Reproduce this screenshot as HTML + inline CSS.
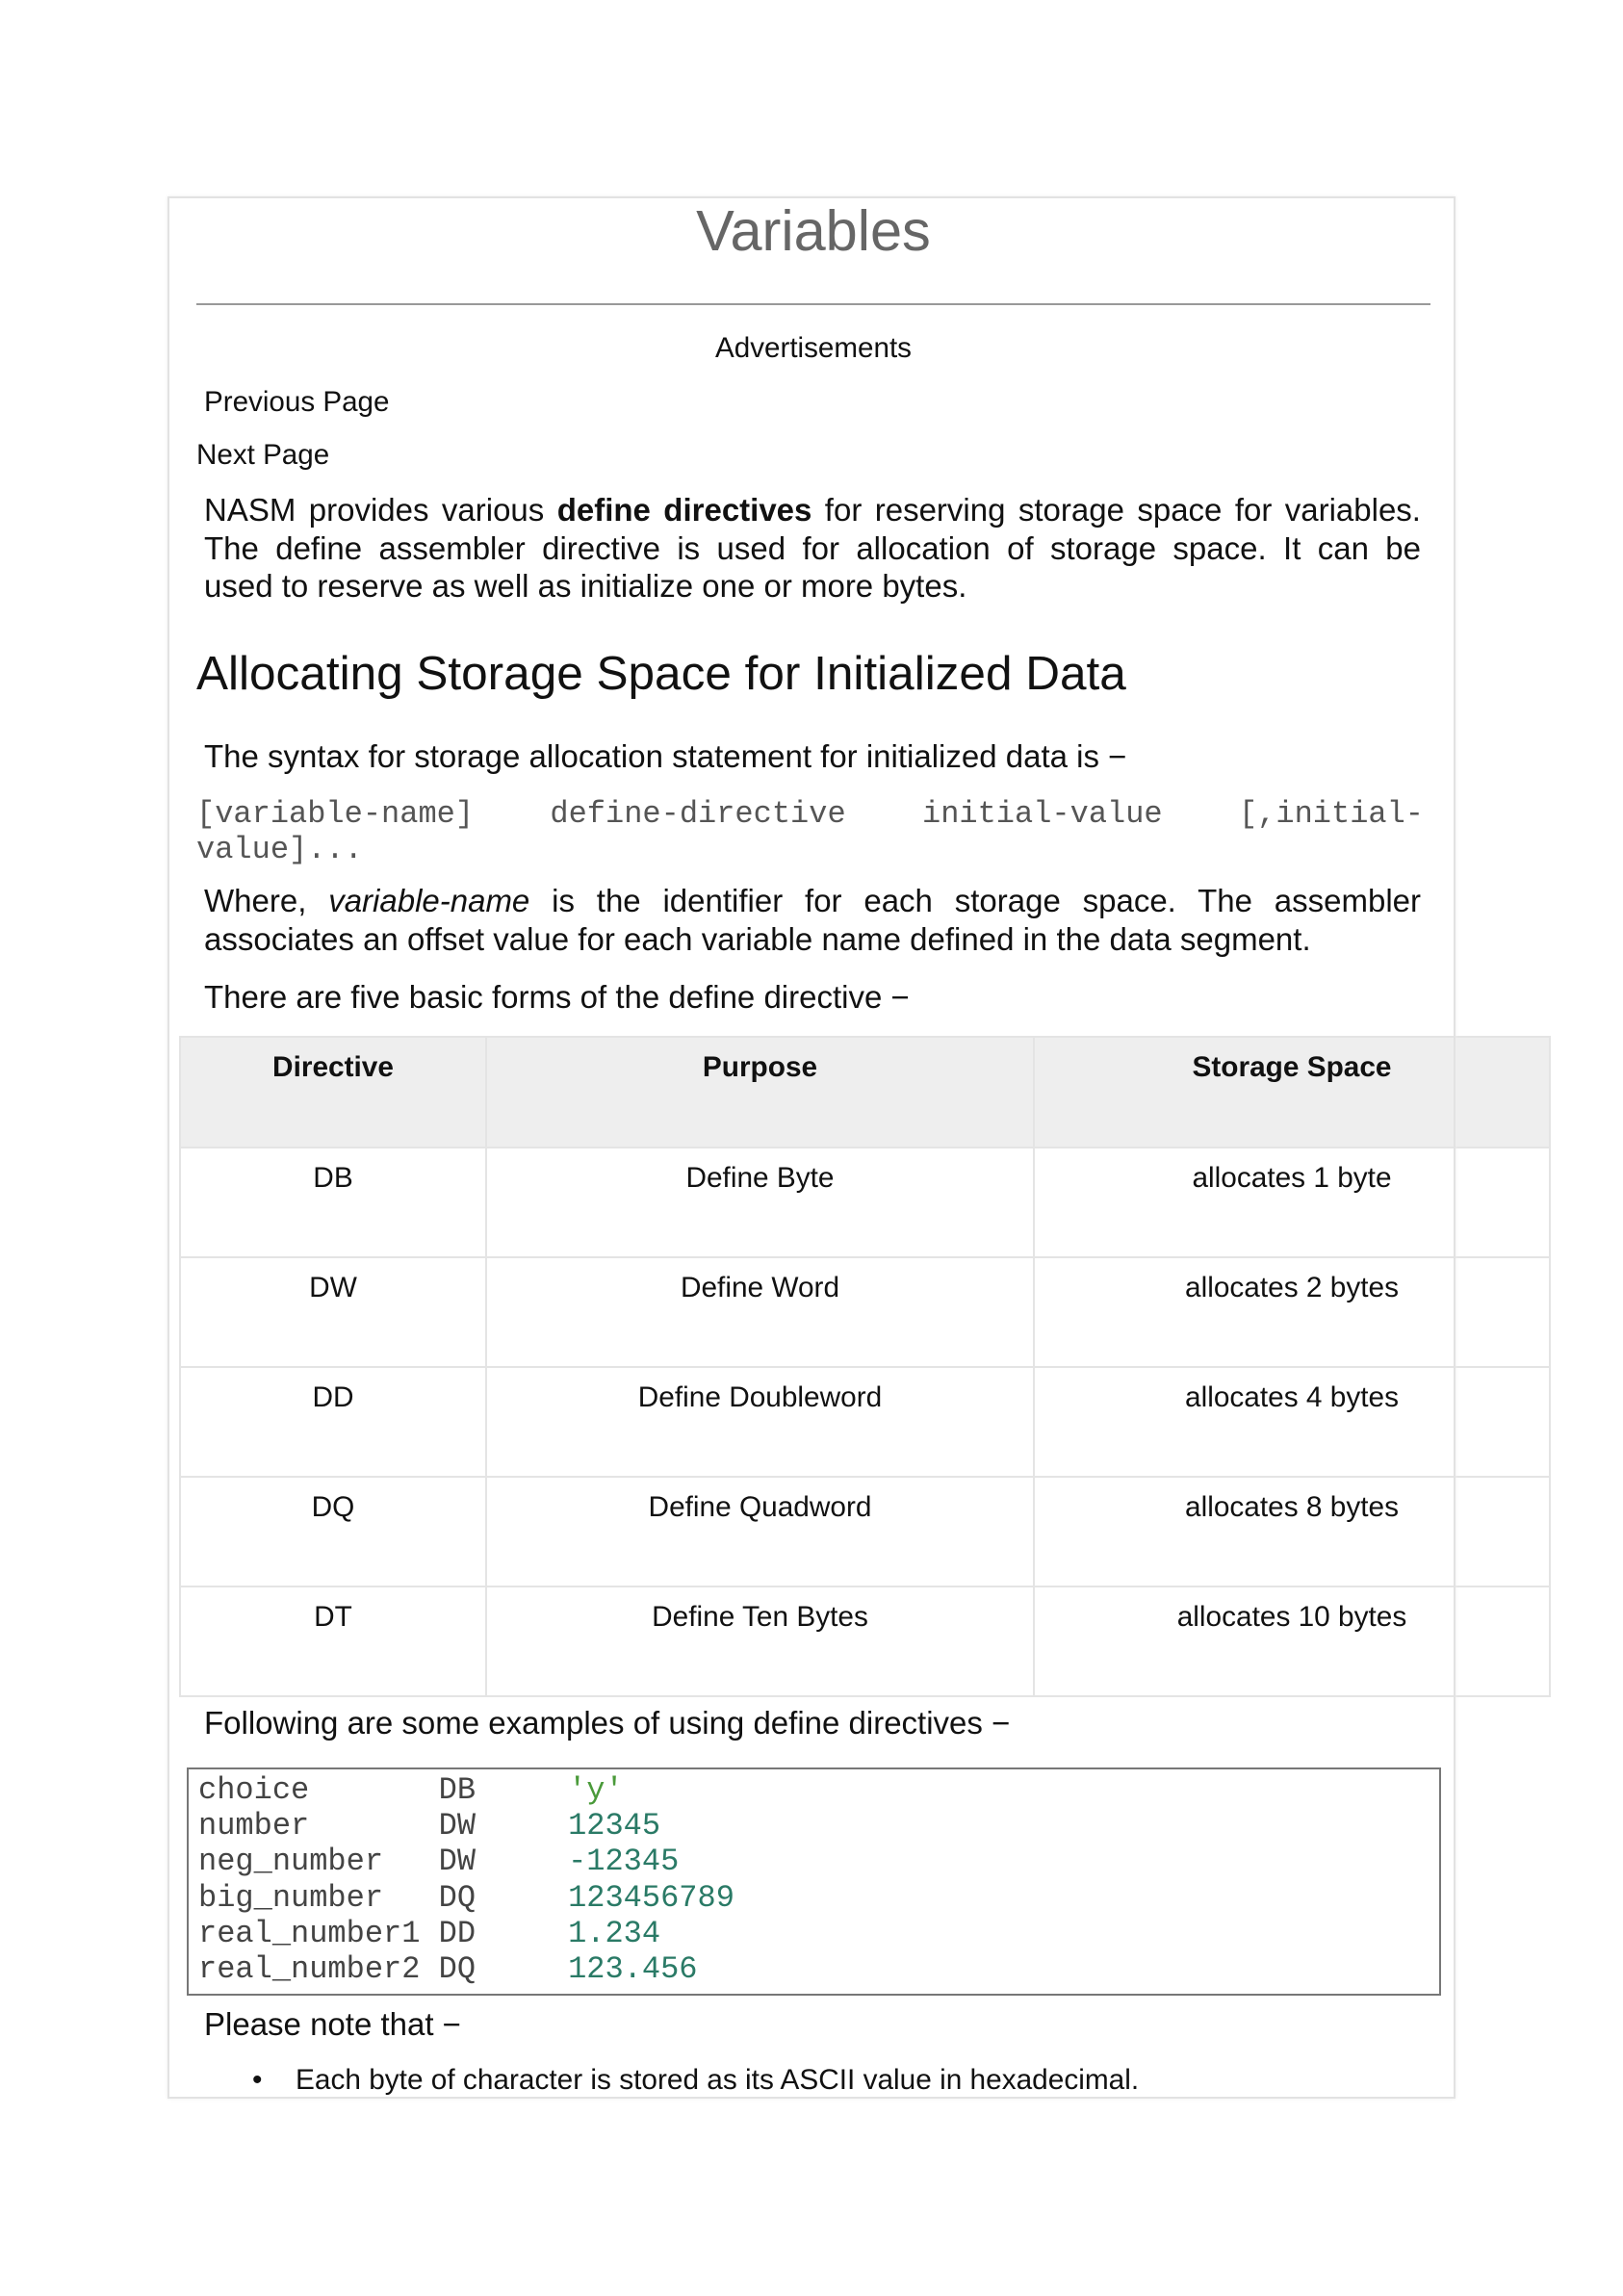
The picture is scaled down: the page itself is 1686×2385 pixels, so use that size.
<!DOCTYPE html>
<html><head><meta charset="utf-8"><style>
body{margin:0;width:1686px;height:2385px;background:#fff;position:relative;overflow:hidden;font-family:"Liberation Sans",Arial,sans-serif;color:#111}
.a{position:absolute;white-space:nowrap}
.box{position:absolute;left:174px;top:204px;width:1334px;height:1972px;border:2px solid #e2e2e2;box-shadow:0 0 4px #eee;z-index:2;pointer-events:none}
.p{position:absolute;left:212px;width:1264px;font-size:33px;line-height:39.5px;text-align:justify;text-align-last:left}
.j{text-align:justify;text-align-last:justify;height:39.5px;overflow:hidden}
.mono{font-family:"Liberation Mono",monospace;color:#555}
table{position:absolute;left:186px;top:1076px;width:1425px;border-collapse:collapse;font-size:29.8px}
td,th{border:2px solid #e4e4e4;text-align:center;vertical-align:top;padding-top:14px;height:97px;font-weight:normal}
th{background:#eee;font-weight:bold;height:98px}
.code{position:absolute;left:194px;top:1836px;width:1303px;height:237px;border:2px solid #777;box-sizing:border-box}
pre{margin:0;position:absolute;left:10px;top:3px;font-family:"Liberation Mono",monospace;font-size:32px;line-height:37.2px;color:#444}
.n{color:#2a7a66}.s{color:#4a9a3a}
</style></head><body>
<div class="box"></div>
<div class="a" style="left:0;width:1690px;text-align:center;top:205px;font-size:59.5px;color:#666;line-height:70px">Variables</div>
<div class="a" style="left:204px;width:1282px;top:315px;height:2px;background:#999"></div>
<div class="a" style="left:0;width:1690px;text-align:center;top:344px;font-size:29.6px;line-height:36px">Advertisements</div>
<div class="a" style="left:212px;top:400px;font-size:29.6px;line-height:36px">Previous Page</div>
<div class="a" style="left:204px;top:455px;font-size:29.6px;line-height:36px">Next Page</div>
<div class="p" style="top:510px"><div class="j">NASM provides various <b>define directives</b> for reserving storage space for variables.</div><div class="j">The define assembler directive is used for allocation of storage space. It can be</div><div>used to reserve as well as initialize one or more bytes.</div></div>
<div class="a" style="left:204px;top:668px;font-size:49.5px;line-height:64px">Allocating Storage Space for Initialized Data</div>
<div class="a" style="left:212px;top:766px;font-size:33px;line-height:40px">The syntax for storage allocation statement for initialized data is −</div>
<div class="a mono" style="left:204px;top:827px;font-size:32px;line-height:37px;width:1275px;white-space:normal;text-align:justify;text-align-last:justify">[variable-name] define-directive initial-value [,initial-</div>
<div class="a mono" style="left:204px;top:864px;font-size:32px;line-height:37px">value]...</div>
<div class="p" style="top:916px">Where, <i>variable-name</i> is the identifier for each storage space. The assembler associates an offset value for each variable name defined in the data segment.</div>
<div class="a" style="left:212px;top:1016px;font-size:33px;line-height:40px">There are five basic forms of the define directive −</div>
<table>
<tr><th style="width:314px">Directive</th><th style="width:565px">Purpose</th><th>Storage Space</th></tr>
<tr><td>DB</td><td>Define Byte</td><td>allocates 1 byte</td></tr>
<tr><td>DW</td><td>Define Word</td><td>allocates 2 bytes</td></tr>
<tr><td>DD</td><td>Define Doubleword</td><td>allocates 4 bytes</td></tr>
<tr><td>DQ</td><td>Define Quadword</td><td>allocates 8 bytes</td></tr>
<tr><td>DT</td><td>Define Ten Bytes</td><td>allocates 10 bytes</td></tr>
</table>
<div class="a" style="left:212px;top:1770px;font-size:33px;line-height:40px">Following are some examples of using define directives −</div>
<div class="code"><pre>choice       DB     <span class="s">'y'</span>
number       DW     <span class="n">12345</span>
neg_number   DW     <span class="n">-12345</span>
big_number   DQ     <span class="n">123456789</span>
real_number1 DD     <span class="n">1.234</span>
real_number2 DQ     <span class="n">123.456</span></pre></div>
<div class="a" style="left:212px;top:2083px;font-size:33px;line-height:40px">Please note that −</div>
<div class="a" style="left:262px;top:2143px;font-size:29.8px;line-height:36px">•</div>
<div class="a" style="left:307px;top:2143px;font-size:29.8px;line-height:36px">Each byte of character is stored as its ASCII value in hexadecimal.</div>
</body></html>
